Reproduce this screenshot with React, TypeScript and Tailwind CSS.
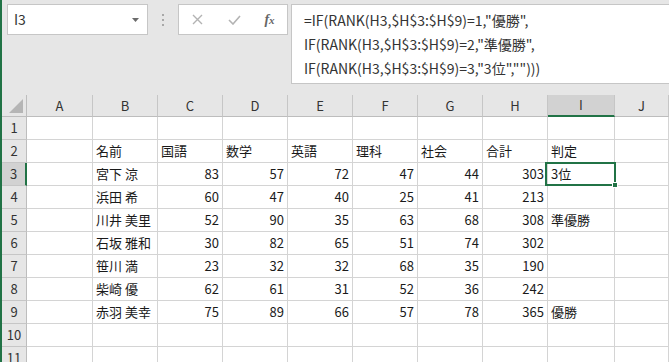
import React from "react";

const COLS = ["A", "B", "C", "D", "E", "F", "G", "H", "I", "J"];

type Row = { name: string; scores: number[]; total: number; mark: string };

const DATA: Row[] = [
  { name: "宮下 涼", scores: [83, 57, 72, 47, 44], total: 303, mark: "3位" },
  { name: "浜田 希", scores: [60, 47, 40, 25, 41], total: 213, mark: "" },
  { name: "川井 美里", scores: [52, 90, 35, 63, 68], total: 308, mark: "準優勝" },
  { name: "石坂 雅和", scores: [30, 82, 65, 51, 74], total: 302, mark: "" },
  { name: "笹川 満", scores: [23, 32, 32, 68, 35], total: 190, mark: "" },
  { name: "柴崎 優", scores: [62, 61, 31, 52, 36], total: 242, mark: "" },
  { name: "赤羽 美幸", scores: [75, 89, 66, 57, 78], total: 365, mark: "優勝" },
];

const HEAD = ["名前", "国語", "数学", "英語", "理科", "社会", "合計", "判定"];

const font = "font-['Noto_Sans_CJK_JP','Noto_Sans',sans-serif]";

function Cell({ children, right, selected }: { children?: React.ReactNode; right?: boolean; selected?: boolean }) {
  return (
    <div className={`relative flex h-[23px] items-end overflow-visible border-r border-b border-[#d4d4d4] bg-white px-[3px] pb-[2px] text-[13px] leading-[18px] text-[#1a1a1a] ${right ? "justify-end" : "justify-start"}`}>
      <span className="whitespace-nowrap">{children}</span>
      {selected && (
        <div className="absolute left-[-3px] top-[-1px] right-[-2px] bottom-[-1px] z-10 border-2 border-[#217346]">
          <div className="absolute right-[-4px] bottom-[-4px] h-[6px] w-[6px] border border-white bg-[#217346]" />
        </div>
      )}
    </div>
  );
}

function RowHead({ n, active }: { n: number; active?: boolean }) {
  return (
    <div className={`flex h-[23px] items-center justify-center border-b border-[#c6c6c6] text-[13px] text-[#333] ${active ? "border-r-2 border-r-[#217346] bg-[#d2d2d2]" : "border-r border-r-[#bdbdbd] bg-[#e6e6e6]"}`}>
      {n}
    </div>
  );
}

function TopBar() {
  return (
    <div className="flex h-[95px] shrink-0 items-start pl-[5px] pt-[4px]">
      <div className="flex h-[31px] w-[141px] shrink-0 items-center justify-between border border-[#c6c6c6] bg-white pl-[6px] pr-[8px]">
        <span className="text-[14px] text-[#333]">I3</span>
        <svg width="7" height="4" viewBox="0 0 7 4"><polygon points="0,0 7,0 3.5,4" fill="#6b6b6b" /></svg>
      </div>
      <div className="flex w-[30px] shrink-0 flex-col items-center gap-[3px] pt-[10px]">
        <span className="h-[2px] w-[2px] bg-[#a8a8a8]" />
        <span className="h-[2px] w-[2px] bg-[#a8a8a8]" />
        <span className="h-[2px] w-[2px] bg-[#a8a8a8]" />
      </div>
      <div className="flex h-[31px] w-[110px] shrink-0 items-center border border-[#c6c6c6] bg-white">
        <div className="flex w-[37px] justify-center">
          <svg width="11" height="11" viewBox="0 0 11 11"><path d="M1 1 L10 10 M10 1 L1 10" stroke="#b3b3b3" strokeWidth="1.4" fill="none" /></svg>
        </div>
        <div className="flex w-[36px] justify-center">
          <svg width="13" height="10" viewBox="0 0 13 10"><path d="M1 5 L5 9 L12 1" stroke="#b3b3b3" strokeWidth="1.6" fill="none" /></svg>
        </div>
        <div className="flex w-[35px] justify-center">
          <span className="font-['Liberation_Serif',serif] text-[14px] font-bold italic text-[#666]">f<span className="text-[11px]">x</span></span>
        </div>
      </div>
      <div className="ml-[3px] h-[80px] w-[390px] shrink-0 border border-[#c6c6c6] bg-white pl-[12px] pt-[3px] text-[14px] leading-[24px] text-[#333]">
        <div>=IF(RANK(H3,$H$3:$H$9)=1,"優勝",</div>
        <div>IF(RANK(H3,$H$3:$H$9)=2,"準優勝",</div>
        <div>IF(RANK(H3,$H$3:$H$9)=3,"3位","")))</div>
      </div>
    </div>
  );
}

export default function App() {
  return (
    <div className={`flex h-[362px] w-[669px] flex-col overflow-hidden border-l-2 border-[#217346] bg-[#e6e6e6] ${font}`}>
      <TopBar />
      <div className="grid grid-cols-[25px_66px_65px_65px_65px_65px_65px_65px_65px_67px_1fr]">
        {/* column headers */}
        <div className="relative h-[22px] border-r border-b border-[#bdbdbd] bg-[#e6e6e6]">
          <svg className="absolute right-[3px] bottom-[3px]" width="14" height="14" viewBox="0 0 14 14"><polygon points="14,0 14,14 0,14" fill="#b5b5b5" /></svg>
        </div>
        {COLS.map((c) => (
          <div
            key={c}
            className={`flex h-[22px] items-center justify-center border-r border-r-[#c6c6c6] text-[13px] text-[#333] ${c === "I" ? "border-b-2 border-b-[#217346] bg-[#d2d2d2]" : "border-b border-b-[#bdbdbd] bg-[#e6e6e6]"}`}
          >
            {c}
          </div>
        ))}

        {/* row 1 */}
        <RowHead n={1} />
        {COLS.map((c) => <Cell key={c} />)}

        {/* row 2 */}
        <RowHead n={2} />
        <Cell />
        {HEAD.map((h) => <Cell key={h}>{h}</Cell>)}
        <Cell />

        {DATA.map((r, i) => (
          <React.Fragment key={r.name}>
            <RowHead n={i + 3} active={i === 0} />
            <Cell />
            <Cell>{r.name}</Cell>
            {r.scores.map((s, j) => <Cell key={j} right>{s}</Cell>)}
            <Cell right>{r.total}</Cell>
            <Cell selected={i === 0}>{r.mark}</Cell>
            <Cell />
          </React.Fragment>
        ))}

        <RowHead n={10} />
        {COLS.map((c) => <Cell key={c} />)}
        <RowHead n={11} />
        {COLS.map((c) => <Cell key={c} />)}
      </div>
    </div>
  );
}
